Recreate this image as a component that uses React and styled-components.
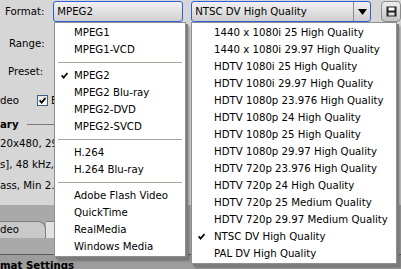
import React from "react";
import styled, { createGlobalStyle } from "styled-components";

const GlobalStyle = createGlobalStyle`
  html, body {
    margin: 0;
    padding: 0;
  }
  body {
    width: 401px;
    height: 269px;
    overflow: hidden;
    background: #d6d6d6;
    font-family: "DejaVu Sans", Verdana, sans-serif;
    font-size: 10.2px;
    color: #000;
  }
`;

const Screen = styled.div`
  position: relative;
  width: 401px;
  height: 269px;
  overflow: hidden;
  background: #d6d6d6;
`;

const Panel = styled.div`
  display: flex;
  flex-direction: column;
  height: 100%;
`;

const TopRow = styled.div`
  display: flex;
  align-items: center;
  height: 21px;
  margin-top: 1px;
`;

const Label = styled.span`
  box-sizing: border-box;
  width: ${({ $w }) => $w || 54}px;
  padding-left: ${({ $indent }) => $indent}px;
  white-space: nowrap;
`;

const Select = styled.div`
  box-sizing: border-box;
  width: ${({ $w }) => $w}px;
  height: 21px;
  margin-right: ${({ $gap }) => $gap || 0}px;
  border: 1px solid #2d62d6;
  border-radius: 3px;
  background: linear-gradient(#f2f2f2, #cfcfcf);
  display: flex;
  align-items: center;
`;

const SelectText = styled.span`
  flex: 1;
  padding-left: 3px;
  white-space: nowrap;
`;

const ArrowButton = styled.div`
  width: 16px;
  height: 100%;
  border-left: 1px solid #8a8a8a;
  display: flex;
  align-items: center;
  justify-content: center;
`;

const SaveButton = styled.div`
  box-sizing: border-box;
  width: 20px;
  height: 21px;
  border: 1px solid #8c8c8c;
  border-radius: 4px;
  background: linear-gradient(#eeeeee, #c4c4c4);
  display: flex;
  align-items: center;
  justify-content: center;
`;

const FieldRow = styled.div`
  display: flex;
  align-items: center;
  height: ${({ $h }) => $h}px;
  margin-top: ${({ $mt }) => $mt || 0}px;
`;

const CheckBox = styled.span`
  box-sizing: border-box;
  width: 11px;
  height: 11px;
  margin: 0 3px 0 18px;
  border: 1px solid #3c5f84;
  background: linear-gradient(#e4e4e4, #ffffff);
  display: flex;
  align-items: center;
  justify-content: center;
`;

const Heading = styled.div`
  display: flex;
  align-items: center;
  height: 18px;
  font-weight: bold;
  gap: 8px;
`;

const HeadingRule = styled.span`
  width: 34px;
  height: 1px;
  background: #7a7a7a;
`;

const InfoLine = styled.div`
  height: 21px;
  line-height: 21px;
  white-space: nowrap;
`;

const TabStrip = styled.div`
  margin-top: 9px;
  height: 49px;
  background: #a9a9a9;
  display: flex;
  align-items: flex-end;
  padding-bottom: 16px;
  box-sizing: border-box;
`;

const Tab = styled.div`
  box-sizing: border-box;
  width: ${({ $w }) => $w}px;
  height: 17px;
  line-height: 15px;
  border-top: 1px solid #7e7e7e;
  border-right: 1px solid #7e7e7e;
  border-top-right-radius: 8px;
  background: ${({ $active }) => ($active ? "#e2e2e2" : "#c9c9c9")};
`;

const BottomBar = styled.div`
  flex: 1;
  border-top: 1px solid #5c5c5c;
  background: #9d9d9d;
  font-weight: bold;
  padding-top: 4px;
  line-height: 13px;
  overflow: hidden;
`;

const Menu = styled.div`
  position: absolute;
  left: ${({ $x }) => $x}px;
  top: 22px;
  width: ${({ $w }) => $w}px;
  box-sizing: border-box;
  padding: 1px 0;
  background: #fff;
  border: 1px solid #8f8f8f;
  box-shadow: 2px 2px 0 #7c7c7c, 4px 4px 2px rgba(0, 0, 0, 0.25);
`;

const Item = styled.div`
  display: grid;
  grid-template-columns: ${({ $gutter }) => $gutter}px 1fr;
  align-items: center;
  height: 17px;
  white-space: nowrap;
`;

const CheckCell = styled.span`
  display: flex;
  padding-left: 6px;
`;

const Separator = styled.div`
  height: 9px;
  display: flex;
  align-items: center;
  padding: 0 3px;

  &::after {
    content: "";
    flex: 1;
    height: 1px;
    background: #a7a59a;
  }
`;

const Check = () => (
  <svg width="7" height="7" viewBox="0 0 7 7">
    <path d="M0.6 3.4 L2.6 5.6 L6.5 1" stroke="#000" strokeWidth="1.8" fill="none" />
  </svg>
);

const Arrow = () => (
  <svg width="9" height="6" viewBox="0 0 9 6">
    <path d="M0 0 H9 L4.5 6 Z" fill="#000" />
  </svg>
);

const Floppy = () => (
  <svg width="11" height="11" viewBox="0 0 11 11">
    <path d="M0.5 0.5 H10.5 V10.5 H0.5 Z" fill="#222" />
    <rect x="2.5" y="1.5" width="6" height="3" fill="#fff" />
    <rect x="2.5" y="6.5" width="6" height="3" fill="#ddd" />
  </svg>
);

const formats = [
  ["MPEG1", "MPEG1-VCD"],
  ["MPEG2", "MPEG2 Blu-ray", "MPEG2-DVD", "MPEG2-SVCD"],
  ["H.264", "H.264 Blu-ray"],
  ["Adobe Flash Video", "QuickTime", "RealMedia", "Windows Media"],
];

const presets = [
  "1440 x 1080i 25 High Quality",
  "1440 x 1080i 29.97 High Quality",
  "HDTV 1080i 25 High Quality",
  "HDTV 1080i 29.97 High Quality",
  "HDTV 1080p 23.976 High Quality",
  "HDTV 1080p 24 High Quality",
  "HDTV 1080p 25 High Quality",
  "HDTV 1080p 29.97 High Quality",
  "HDTV 720p 23.976 High Quality",
  "HDTV 720p 24 High Quality",
  "HDTV 720p 25 Medium Quality",
  "HDTV 720p 29.97 Medium Quality",
  "NTSC DV High Quality",
  "PAL DV High Quality",
];

const MenuItem = ({ label, checked, gutter }) => (
  <Item $gutter={gutter}>
    <CheckCell>{checked && <Check />}</CheckCell>
    <span>{label}</span>
  </Item>
);

const App = () => {
  return (
    <Screen>
      <GlobalStyle />
      <Panel>
        <TopRow>
          <Label $indent={5}>Format:</Label>
          <Select $w={132} $gap={8}>
            <SelectText>MPEG2</SelectText>
          </Select>
          <Select $w={183} $gap={10}>
            <SelectText>NTSC DV High Quality</SelectText>
            <ArrowButton>
              <Arrow />
            </ArrowButton>
          </Select>
          <SaveButton>
            <Floppy />
          </SaveButton>
        </TopRow>
        <FieldRow $h={28} $mt={7}>
          <Label $indent={9}>Range:</Label>
        </FieldRow>
        <FieldRow $h={28}>
          <Label $indent={8}>Preset:</Label>
        </FieldRow>
        <FieldRow $h={30}>
          <span>deo</span>
          <CheckBox>
            <Check />
          </CheckBox>
          <span>E</span>
        </FieldRow>
        <Heading>
          <span>ary</span>
          <HeadingRule />
        </Heading>
        <InfoLine>20x480, 29.</InfoLine>
        <InfoLine>s], 48 kHz,</InfoLine>
        <InfoLine>ass, Min 2.5</InfoLine>
        <TabStrip>
          <Tab $w={46}>deo</Tab>
          <Tab $w={140} $active />
        </TabStrip>
        <BottomBar>mat Settings</BottomBar>
      </Panel>

      <Menu $x={54} $w={132}>
        {formats.map((group, gi) => (
          <React.Fragment key={gi}>
            {gi > 0 && <Separator />}
            {group.map((f) => (
              <MenuItem key={f} label={f} checked={f === "MPEG2"} gutter={19} />
            ))}
          </React.Fragment>
        ))}
      </Menu>

      <Menu $x={191} $w={206}>
        {presets.map((p) => (
          <MenuItem key={p} label={p} checked={p === "NTSC DV High Quality"} gutter={22} />
        ))}
      </Menu>
    </Screen>
  );
};

export default App;
